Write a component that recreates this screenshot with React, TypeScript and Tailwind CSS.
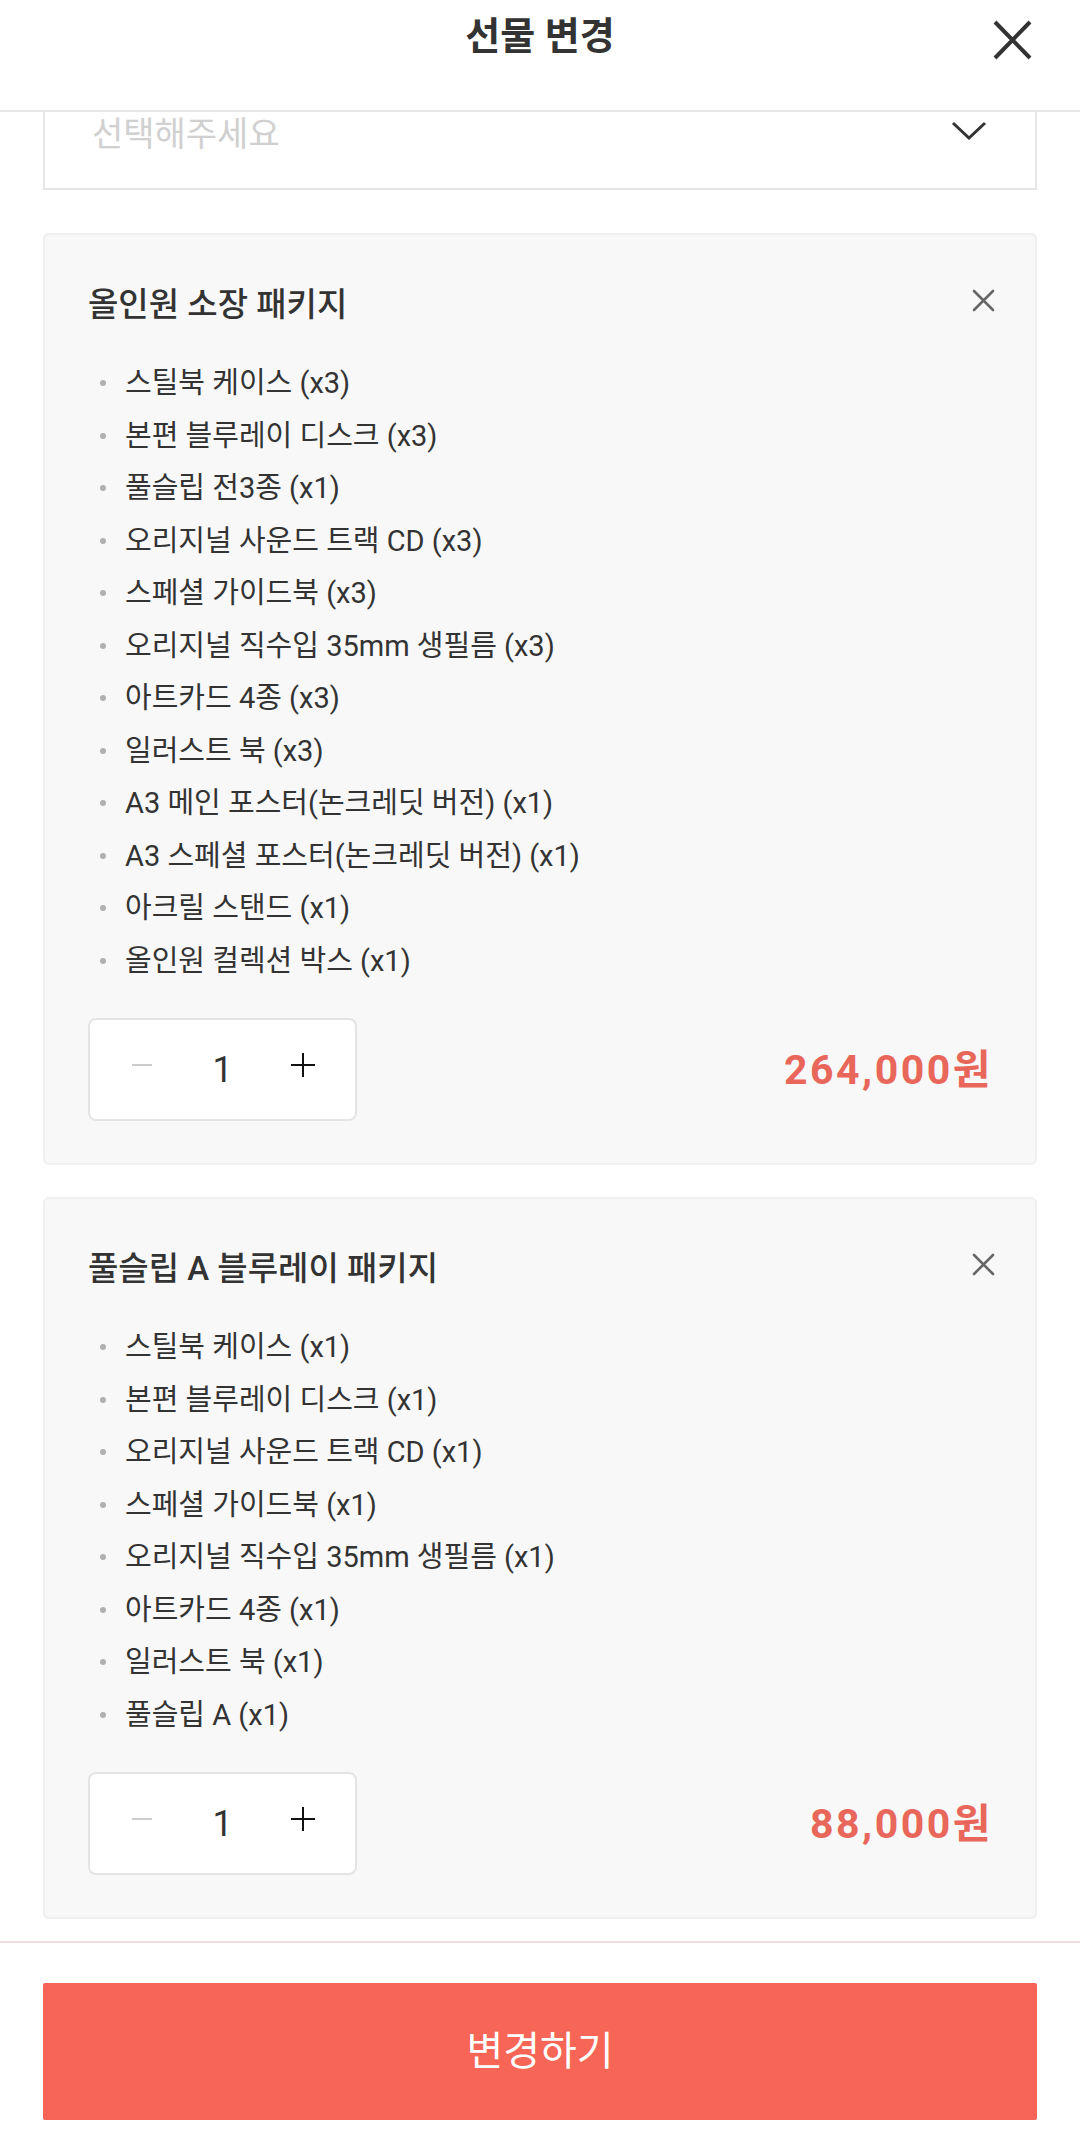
import React from "react";

type Pkg = {
  name: string;
  items: string[];
  price: string;
};

const packages: Pkg[] = [
  {
    name: "올인원 소장 패키지",
    items: [
      "스틸북 케이스 (x3)",
      "본편 블루레이 디스크 (x3)",
      "풀슬립 전3종 (x1)",
      "오리지널 사운드 트랙 CD (x3)",
      "스페셜 가이드북 (x3)",
      "오리지널 직수입 35mm 생필름 (x3)",
      "아트카드 4종 (x3)",
      "일러스트 북 (x3)",
      "A3 메인 포스터(논크레딧 버전) (x1)",
      "A3 스페셜 포스터(논크레딧 버전) (x1)",
      "아크릴 스탠드 (x1)",
      "올인원 컬렉션 박스 (x1)",
    ],
    price: "264,000원",
  },
  {
    name: "풀슬립 A 블루레이 패키지",
    items: [
      "스틸북 케이스 (x1)",
      "본편 블루레이 디스크 (x1)",
      "오리지널 사운드 트랙 CD (x1)",
      "스페셜 가이드북 (x1)",
      "오리지널 직수입 35mm 생필름 (x1)",
      "아트카드 4종 (x1)",
      "일러스트 북 (x1)",
      "풀슬립 A (x1)",
    ],
    price: "88,000원",
  },
];

const PackageCard = ({ pkg }: { pkg: Pkg }) => {
  return (
    <div className="rounded-[6px] border-2 border-[#efefef] bg-[#f8f8f8] pl-[43px] pr-[44px] pt-[50px] pb-[42px]">
      <div className="flex items-start justify-between">
        <h2 className="text-[33px] leading-[40px] font-medium text-[#333]">
          {pkg.name}
        </h2>
        <button className="mt-[4px] -mr-[4px] text-[#666]" aria-label="삭제">
          <svg width="23" height="23" viewBox="0 0 23 23">
            <path
              d="M2 2 L21 21 M21 2 L2 21"
              stroke="currentColor"
              strokeWidth="2.6"
              strokeLinecap="round"
            />
          </svg>
        </button>
      </div>

      <ul className="mt-[32px] pl-[12px]">
        {pkg.items.map((item) => (
          <li
            key={item}
            className="flex items-center gap-[19px] text-[29px] leading-[52.5px] text-[#333]"
          >
            <span className="h-[6px] w-[6px] flex-none rounded-full bg-[#b0b0b0]" />
            {item}
          </li>
        ))}
      </ul>

      <div className="mt-[31px] flex items-center justify-between">
        <div className="grid h-[103px] w-[269px] grid-cols-[104px_1fr_104px] items-center rounded-[8px] border-2 border-[#e4e4e4] bg-white">
          <button className="flex justify-center -mt-[10px]" aria-label="빼기">
            <svg width="20" height="4" viewBox="0 0 20 4">
              <path d="M0 2 H20" stroke="#cccccc" strokeWidth="2" />
            </svg>
          </button>
          <span className="text-center text-[36px] leading-[40px] text-[#333]">
            1
          </span>
          <button className="flex justify-center -mt-[10px]" aria-label="더하기">
            <svg width="24" height="24" viewBox="0 0 24 24">
              <path d="M0 12 H24 M12 0 V24" stroke="#111" strokeWidth="2" />
            </svg>
          </button>
        </div>
        <span className="text-[41px] leading-[48px] font-bold tracking-[2.5px] text-[#e8675a] -mr-[2px]">
          {pkg.price}
        </span>
      </div>
    </div>
  );
};

export default function App() {
  return (
    <div className="min-h-[2155px] w-[1080px] bg-white font-[Roboto,'Noto_Sans_CJK_KR',sans-serif]">
      <header className="grid h-[112px] grid-cols-[1fr_auto_1fr] items-start border-b-2 border-[#e6e6e6]">
        <div />
        <h1 className="pt-[12px] text-[38px] leading-[48px] font-bold text-[#333]">
          선물 변경
        </h1>
        <div className="flex justify-end pr-[47px] pt-[20px]">
          <button aria-label="닫기" className="text-[#333]">
            <svg width="41" height="40" viewBox="0 0 41 40">
              <path
                d="M3 2 L38 38 M38 2 L3 38"
                stroke="currentColor"
                strokeWidth="4"
              />
            </svg>
          </button>
        </div>
      </header>

      <div className="mx-[43px] mt-0">
        <div className="flex h-[78px] items-start justify-between border-x-2 border-b-2 border-[#e6e6e6] pl-[47px] pr-[48px]">
          <span className="pt-[2px] text-[34px] leading-[40px] text-[#d0d0d0]">
            선택해주세요
          </span>
          <svg width="36" height="19" viewBox="0 0 36 19" className="mt-[9px]">
            <path
              d="M2 2 L18 17 L34 2"
              fill="none"
              stroke="#333"
              strokeWidth="3"
            />
          </svg>
        </div>

        <div className="mt-[43px] flex flex-col gap-[32px]">
          {packages.map((pkg) => (
            <PackageCard key={pkg.name} pkg={pkg} />
          ))}
        </div>
      </div>

      <div className="mt-[22px] border-t-2 border-[#ecdede] px-[43px] pt-[40px] pb-[34px]">
        <button className="flex h-[137px] w-full items-center justify-center rounded-[2px] bg-[#f66555] text-[40px] leading-[48px] text-white">
          변경하기
        </button>
      </div>
    </div>
  );
}
